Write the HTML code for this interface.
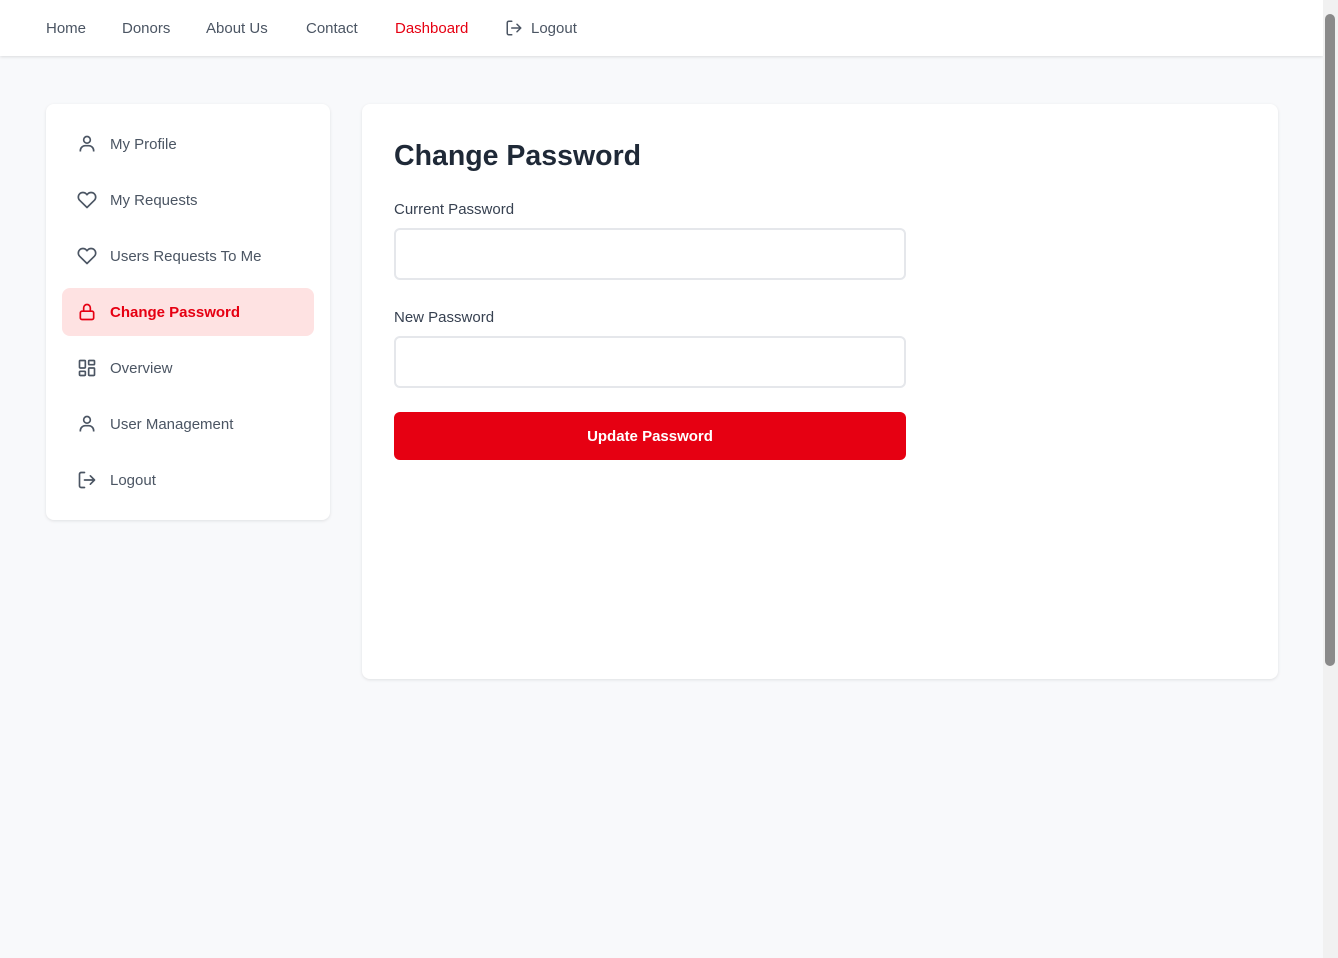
<!DOCTYPE html>
<html><head><style>
*{box-sizing:border-box;margin:0;padding:0}
body{width:1338px;height:958px;overflow:hidden;background:#f8f9fb;font-family:"Liberation Sans",sans-serif;position:relative}
.nav{position:absolute;left:0;top:0;width:1323px;height:56px;background:#fff;box-shadow:0 1px 3px rgba(0,0,0,.12)}
.nav a{position:absolute;top:20px;font-size:15px;color:#4b5563;text-decoration:none}
.side{position:absolute;left:46px;top:104px;width:284px;height:416px;background:#fff;border-radius:8px;box-shadow:0 1px 3px rgba(0,0,0,.1)}
.item{position:absolute;left:16px;width:252px;height:48px;border-radius:8px;font-size:15px;color:#4b5563}
.item svg{position:absolute;left:15px;top:14px}
.item span{position:absolute;left:48px;top:16px}
.item.act{background:#fee2e2;color:#e60012;font-weight:bold}
.main{position:absolute;left:362px;top:104px;width:916px;height:575px;background:#fff;border-radius:8px;box-shadow:0 1px 3px rgba(0,0,0,.1)}
h1{position:absolute;left:32px;top:36px;font-size:28.5px;color:#1f2937;font-weight:bold}
label{position:absolute;left:32px;font-size:15px;color:#374151}
.inp{position:absolute;left:32px;width:512px;height:52px;border:2px solid #e5e7eb;border-radius:6px}
.btn{position:absolute;left:32px;top:308px;width:512px;height:48px;background:#e60012;border-radius:6px;color:#fff;font-weight:bold;font-size:15px;text-align:center;line-height:50px}
.sb{position:absolute;right:0;top:0;width:15px;height:958px;background:#f1f1f1}
.thumb{position:absolute;left:2px;top:14px;width:10px;height:652px;background:#8a8a8a;border-radius:5px}
</style></head><body>
<div class="nav">
<a style="left:46px">Home</a><a style="left:122px">Donors</a><a style="left:206px">About Us</a><a style="left:306px">Contact</a><a style="left:395px;color:#e60012">Dashboard</a>
<svg style="position:absolute;left:505px;top:19px" width="18" height="18" viewBox="0 0 24 24" fill="none" stroke="#4b5563" stroke-width="2" stroke-linecap="round" stroke-linejoin="round"><path d="M9 21H5a2 2 0 0 1-2-2V5a2 2 0 0 1 2-2h4M16 17l5-5-5-5M21 12H9"/></svg>
<a style="left:531px">Logout</a>
</div>
<div class="side">
<div class="item" style="top:16px"><svg width="20" height="20" viewBox="0 0 24 24" fill="none" stroke="#4b5563" stroke-width="2"><circle cx="12" cy="7" r="4"/><path d="M4 21v-1a6 6 0 0 1 6-6h4a6 6 0 0 1 6 6v1"/></svg><span>My Profile</span></div>
<div class="item" style="top:72px"><svg width="20" height="20" viewBox="0 0 24 24" fill="none" stroke="#4b5563" stroke-width="2" stroke-linejoin="round"><path d="M20.8 4.6a5.5 5.5 0 0 0-7.8 0L12 5.7l-1-1.1a5.5 5.5 0 0 0-7.8 7.8L12 21l8.8-8.6a5.5 5.5 0 0 0 0-7.8z"/></svg><span>My Requests</span></div>
<div class="item" style="top:128px"><svg width="20" height="20" viewBox="0 0 24 24" fill="none" stroke="#4b5563" stroke-width="2" stroke-linejoin="round"><path d="M20.8 4.6a5.5 5.5 0 0 0-7.8 0L12 5.7l-1-1.1a5.5 5.5 0 0 0-7.8 7.8L12 21l8.8-8.6a5.5 5.5 0 0 0 0-7.8z"/></svg><span>Users Requests To Me</span></div>
<div class="item act" style="top:184px"><svg width="20" height="20" viewBox="0 0 24 24" fill="none" stroke="#e60012" stroke-width="2"><rect x="4" y="11" width="16" height="10" rx="2"/><path d="M8 11V7a4 4 0 0 1 8 0v4"/></svg><span>Change Password</span></div>
<div class="item" style="top:240px"><svg width="20" height="20" viewBox="0 0 24 24" fill="none" stroke="#4b5563" stroke-width="2"><rect x="3" y="3" width="7" height="9" rx="1"/><rect x="14" y="3" width="7" height="5" rx="1"/><rect x="14" y="12" width="7" height="9" rx="1"/><rect x="3" y="16" width="7" height="5" rx="1"/></svg><span>Overview</span></div>
<div class="item" style="top:296px"><svg width="20" height="20" viewBox="0 0 24 24" fill="none" stroke="#4b5563" stroke-width="2"><circle cx="12" cy="7" r="4"/><path d="M4 21v-1a6 6 0 0 1 6-6h4a6 6 0 0 1 6 6v1"/></svg><span>User Management</span></div>
<div class="item" style="top:352px"><svg width="20" height="20" viewBox="0 0 24 24" fill="none" stroke="#4b5563" stroke-width="2" stroke-linecap="round" stroke-linejoin="round"><path d="M9 21H5a2 2 0 0 1-2-2V5a2 2 0 0 1 2-2h4M16 17l5-5-5-5M21 12H9"/></svg><span>Logout</span></div>
</div>
<div class="main">
<h1>Change Password</h1>
<label style="top:97px">Current Password</label>
<div class="inp" style="top:124px"></div>
<label style="top:205px">New Password</label>
<div class="inp" style="top:232px"></div>
<div class="btn">Update Password</div>
</div>
<div class="sb"><div class="thumb"></div></div>
</body></html>
